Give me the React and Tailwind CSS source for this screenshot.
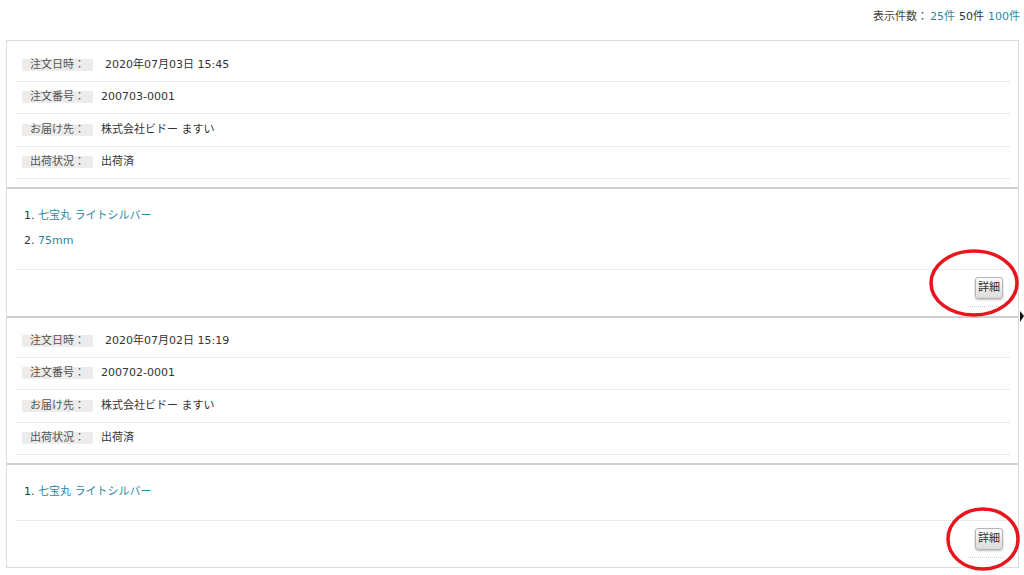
import React from "react";

const orders = [
  {
    date: "2020年07月03日 15:45",
    no: "200703-0001",
    to: "株式会社ビドー ますい",
    status: "出荷済",
    items: ["七宝丸 ライトシルバー", "75mm"],
  },
  {
    date: "2020年07月02日 15:19",
    no: "200702-0001",
    to: "株式会社ビドー ますい",
    status: "出荷済",
    items: ["七宝丸 ライトシルバー"],
  },
];

function Row({ label, value, first }) {
  return (
    <div className="h-[32.5px] flex items-center pl-[6px] border-b border-dotted border-[#d8d8d8]">
      <span className="w-[71px] h-[12px] leading-[12px] bg-[#ececec] pl-[8px] text-[#555]">
        {label}
      </span>
      <span className={first ? "ml-[12px] text-[#333]" : "ml-[8px] text-[#333]"}>{value}</span>
    </div>
  );
}

function Order({ order, first }) {
  return (
    <>
      {/* 注文情報 */}
      <div className={`px-[9px] pb-[8px] border-b-2 border-[#d0d0d0] ${first ? "pt-[8px]" : "pt-[7px]"}`}>
        <Row label="注文日時：" value={order.date} first />
        <Row label="注文番号：" value={order.no} />
        <Row label="お届け先：" value={order.to} />
        <Row label="出荷状況：" value={order.status} />
      </div>
      {/* 商品 */}
      <div className="px-[9px] pb-[9px] border-b-2 border-[#d0d0d0] last:border-b-0">
        <ol className="pt-[14px] pb-[16px] pl-[8px] border-b border-dotted border-[#d8d8d8]">
          {order.items.map((item, i) => (
            <li key={i} className="leading-[25px] text-[#333]">
              {i + 1}. <a className="text-[#2a88a0]">{item}</a>
            </li>
          ))}
        </ol>
        <div className="flex justify-end pr-[6px] pt-[7px]">
          <div className="pl-[7px] pb-[7px] border-b border-dotted border-[#d0d0d0]">
            <button className="w-[28px] h-[22px] flex items-center justify-center text-[11px] text-[#333] border border-[#b4b4b4] rounded-[3px] bg-gradient-to-b from-[#fafafa] to-[#dcdcdc] shadow-[0_1px_2px_rgba(0,0,0,0.25)]">
              詳細
            </button>
          </div>
        </div>
      </div>
    </>
  );
}

export default function App() {
  return (
    <div
      className="relative w-[1024px] h-[575px] overflow-hidden bg-white text-[11px] text-[#333]"
      style={{ fontFamily: '"DejaVu Sans", "Noto Sans CJK JP", sans-serif' }}
    >
      {/* 表示件数 */}
      <div className="h-[40px] flex justify-end items-start pt-[9px] pr-[4px] leading-[16px]">
        <span className="text-[#444]">表示件数：</span>
        <a className="ml-[2px] text-[#2a88a0]">25件</a>
        <span className="ml-[4px] text-[#333]">50件</span>
        <a className="ml-[4px] text-[#2a88a0]">100件</a>
      </div>

      <div className="ml-[6px] w-[1013px] border border-[#dcdcdc]">
        {orders.map((o, i) => (
          <Order key={i} order={o} first={i === 0} />
        ))}
      </div>

      {/* 注釈の赤丸 */}
      <svg className="absolute left-0 top-0 pointer-events-none" width="1024" height="575">
        <ellipse cx="974" cy="283" rx="43" ry="32" fill="none" stroke="#e8151d" strokeWidth="3.5" />
        <ellipse cx="983" cy="539" rx="35" ry="30" fill="none" stroke="#e8151d" strokeWidth="3.5" />
        <path d="M1020 311 L1024 316 L1020 322 Z" fill="#111" />
      </svg>
    </div>
  );
}
